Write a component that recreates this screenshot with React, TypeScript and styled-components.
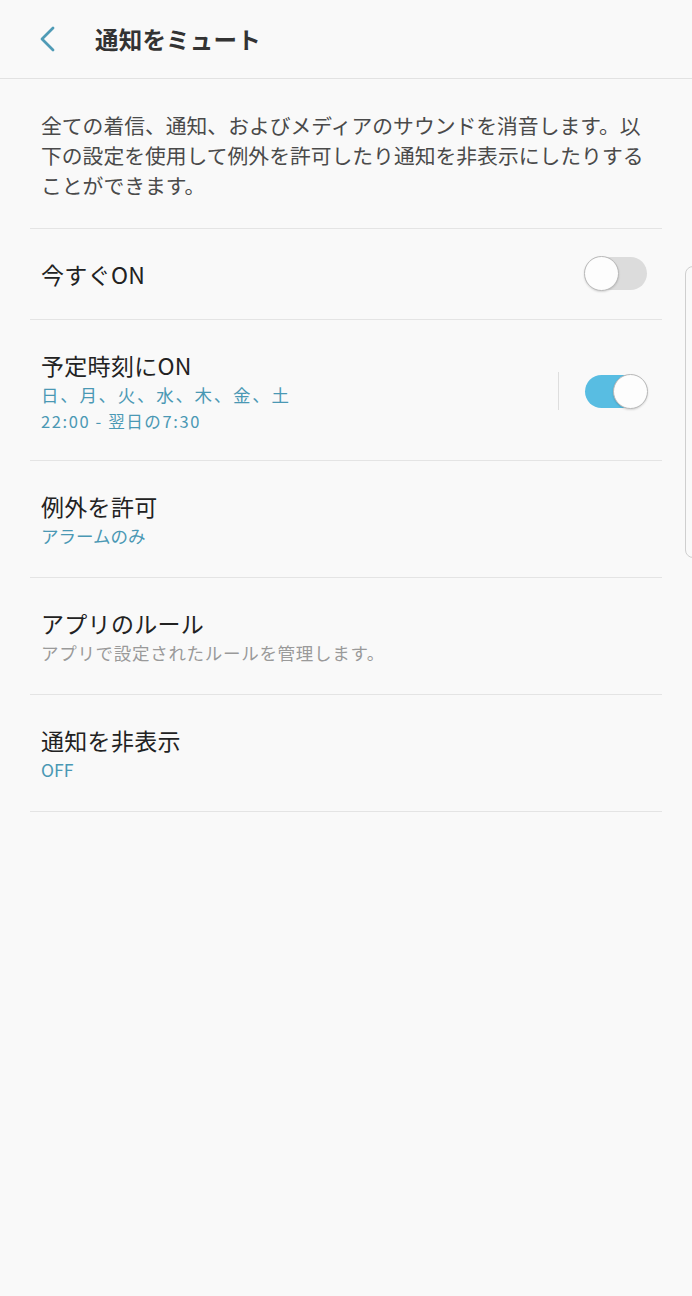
import React from 'react';
import styled, { createGlobalStyle, css } from 'styled-components';

const GlobalStyle = createGlobalStyle`
  html, body {
    margin: 0;
    padding: 0;
    background: #f9f9f9;
  }
  body {
    font-family: "Noto Sans CJK JP", "Noto Sans", sans-serif;
    color: #252525;
  }
`;

const Screen = styled.div`
  position: relative;
  width: 692px;
  min-height: 1296px;
  background: #f9f9f9;
  overflow: hidden;
`;

const Header = styled.header`
  display: flex;
  align-items: center;
  height: 78px;
  border-bottom: 1px solid #e2e2e2;
  padding-left: 36px;
`;

const BackButton = styled.button`
  display: flex;
  align-items: center;
  justify-content: center;
  width: 22px;
  height: 28px;
  padding: 0;
  border: none;
  background: none;
  margin-right: 37px;
`;

const Title = styled.h1`
  margin: 0;
  font-size: 23.5px;
  font-weight: 700;
  color: #333;
  letter-spacing: 0.2px;
`;

const List = styled.div`
  margin: 0 30px;
`;

const Description = styled.p`
  margin: 0;
  padding: 31px 12px 28px 11px;
  font-size: 20.8px;
  line-height: 30px;
  color: #4a4a4a;
  border-bottom: 1px solid #e4e4e4;
`;

const Row = styled.div<{ $single?: boolean }>`
  display: flex;
  align-items: center;
  padding: 29px 15px 27px 11px;
  border-bottom: 1px solid #e4e4e4;
  ${(p) => p.$single && css`
    padding: 28px 15px 29px 11px;
  `}
`;

const Texts = styled.div`
  flex: 1;
  display: flex;
  flex-direction: column;
`;

const ItemTitle = styled.div`
  font-size: 23px;
  line-height: 32px;
  color: #222;
  letter-spacing: 0.3px;
`;

const Sub = styled.div<{ $gray?: boolean; $small?: boolean }>`
  font-size: 17.5px;
  line-height: 28px;
  color: ${(p) => (p.$gray ? '#9a9a9a' : '#4a98b4')};
  letter-spacing: ${(p) => (p.$gray ? '0.7px' : '0')};
  ${(p) => p.$small && css`
    font-size: 16.5px;
    line-height: 24px;
    letter-spacing: 1.6px;
  `}
`;

const Days = styled(Sub)`
  letter-spacing: 1.7px;
`;

const Separator = styled.div`
  width: 1px;
  height: 38px;
  background: #dedede;
  margin-right: 26px;
`;

const Track = styled.div<{ $on?: boolean }>`
  position: relative;
  width: 62px;
  height: 33px;
  border-radius: 17px;
  background: ${(p) => (p.$on ? '#58bde2' : '#dcdcdc')};
  display: flex;
  align-items: center;
  justify-content: ${(p) => (p.$on ? 'flex-end' : 'flex-start')};
`;

const Thumb = styled.div`
  width: 35px;
  height: 35px;
  border-radius: 50%;
  background: #fdfdfd;
  border: 1px solid #b9b9b9;
  box-sizing: border-box;
  box-shadow: 0 1px 2px rgba(0, 0, 0, 0.15);
  margin: 0 -1px;
`;

const EdgeHandle = styled.div`
  position: absolute;
  right: -10px;
  top: 266px;
  width: 15px;
  height: 290px;
  border: 1px solid #cfcfcf;
  border-radius: 8px;
  background: #f9f9f9;
`;

function Toggle({ on }: { on?: boolean }) {
  return (
    <Track $on={on}>
      <Thumb />
    </Track>
  );
}

export default function App() {
  return (
    <>
      <GlobalStyle />
      <Screen>
        <Header>
          <BackButton aria-label="戻る">
            <svg width="18" height="26" viewBox="0 0 18 26">
              <path d="M15 2 L4 13 L15 24" fill="none" stroke="#4f9bb6" strokeWidth="2.8" strokeLinecap="round" strokeLinejoin="round" />
            </svg>
          </BackButton>
          <Title>通知をミュート</Title>
        </Header>
        <List>
          <Description>
            全ての着信、通知、およびメディアのサウンドを消音します。以下の設定を使用して例外を許可したり通知を非表示にしたりすることができます。
          </Description>
          <Row $single>
            <Texts>
              <ItemTitle>今すぐON</ItemTitle>
            </Texts>
            <Toggle />
          </Row>
          <Row>
            <Texts>
              <ItemTitle>予定時刻にON</ItemTitle>
              <Days>日、月、火、水、木、金、土</Days>
              <Sub $small>22:00 - 翌日の7:30</Sub>
            </Texts>
            <Separator />
            <Toggle on />
          </Row>
          <Row>
            <Texts>
              <ItemTitle>例外を許可</ItemTitle>
              <Sub>アラームのみ</Sub>
            </Texts>
          </Row>
          <Row>
            <Texts>
              <ItemTitle>アプリのルール</ItemTitle>
              <Sub $gray>アプリで設定されたルールを管理します。</Sub>
            </Texts>
          </Row>
          <Row>
            <Texts>
              <ItemTitle>通知を非表示</ItemTitle>
              <Sub>OFF</Sub>
            </Texts>
          </Row>
        </List>
        <EdgeHandle />
      </Screen>
    </>
  );
}
